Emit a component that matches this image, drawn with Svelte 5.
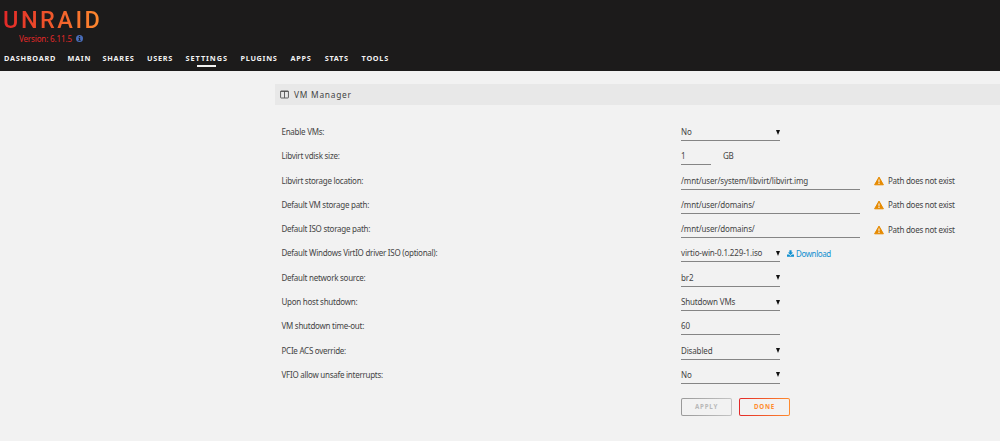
<script>
  const tabs = [
    { name: 'Dashboard', width: 52 },
    { name: 'Main', width: 22.5 },
    { name: 'Shares', width: 32 },
    { name: 'Users', width: 27 },
    { name: 'Settings', width: 42.5 },
    { name: 'Plugins', width: 38 },
    { name: 'Apps', width: 22 },
    { name: 'Stats', width: 25.5 },
    { name: 'Tools', width: 27.5 }
  ]
  const activeTab = 'Settings'

  const fields = [
    { label: 'Enable VMs:', type: 'select', value: 'No' },
    { label: 'Libvirt vdisk size:', type: 'small', value: '1', unit: 'GB' },
    { label: 'Libvirt storage location:', type: 'path', value: '/mnt/user/system/libvirt/libvirt.img', warning: 'Path does not exist' },
    { label: 'Default VM storage path:', type: 'path', value: '/mnt/user/domains/', warning: 'Path does not exist' },
    { label: 'Default ISO storage path:', type: 'path', value: '/mnt/user/domains/', warning: 'Path does not exist' },
    { label: 'Default Windows VirtIO driver ISO (optional):', type: 'select', value: 'virtio-win-0.1.229-1.iso', download: true },
    { label: 'Default network source:', type: 'select', value: 'br2' },
    { label: 'Upon host shutdown:', type: 'select', value: 'Shutdown VMs' },
    { label: 'VM shutdown time-out:', type: 'text', value: '60' },
    { label: 'PCIe ACS override:', type: 'select', value: 'Disabled' },
    { label: 'VFIO allow unsafe interrupts:', type: 'select', value: 'No' }
  ]
</script>

<header class="header">
  <div class="logo">UNRAID</div>
  <div class="version">
    <span>Version: 6.11.5</span>
    <svg class="info" viewBox="0 0 16 16">
      <circle cx="8" cy="8" r="8" fill="#486dba" />
      <path d="M6.7 2.4h2.8v2.4H6.7zM5.3 6.2h4.2v5.2h1.3v1.9H5.3v-1.9h1.4V8.1H5.3z" fill="#1c1c1c" />
    </svg>
  </div>
  <nav class="nav">
    {#each tabs as tab (tab.name)}
      <span class="tab" class:tab--active={tab.name === activeTab} style="width: {tab.width}px">{tab.name}</span>
    {/each}
  </nav>
</header>

<main class="content">
  <h1 class="title">
    <svg class="title-icon" viewBox="0 0 16 16" fill="none" stroke="#4a4a4a" stroke-width="1.5">
      <rect x="1" y="1.8" width="14" height="12.4" rx="1" />
      <path d="M1 2.6h14M8 2v12" />
    </svg>
    <span>VM Manager</span>
  </h1>

  <div class="form">
    {#each fields as field (field.label)}
      <div class="row">
        <span class="label">{field.label}</span>
        <div class="control control--{field.type}">
          <span>{field.value}</span>
          {#if field.type === 'select'}
            <svg class="caret" viewBox="0 0 4 5"><path d="M0 0h4L2 5z" fill="#111" /></svg>
          {/if}
        </div>
        {#if field.unit}
          <span class="unit">{field.unit}</span>
        {/if}
        {#if field.warning}
          <span class="warning">
            <svg class="warning-icon" viewBox="0 0 20 18">
              <path d="M10 1.2 18.8 16.6H1.2z" fill="#e68a00" stroke="#e68a00" stroke-width="2" stroke-linejoin="round" />
              <path d="M8.7 6h2.6l-.4 5.4H9.1zM8.8 12.7h2.4v2.3H8.8z" fill="#f2f2f2" />
            </svg>
            <span>{field.warning}</span>
          </span>
        {/if}
        {#if field.download}
          <a class="download" href="#download">
            <svg class="download-icon" viewBox="0 0 16 15">
              <path d="M5.5 0h5v5H14l-6 6-6-6h3.5z" fill="#1190d0" />
              <path d="M0 9.8h4.8L8 13l3.2-3.2H16V15H0z" fill="#1190d0" />
            </svg>
            <span>Download</span>
          </a>
        {/if}
      </div>
    {/each}
    <div class="buttons">
      <button class="button button--disabled"><span>Apply</span></button>
      <button class="button"><span>Done</span></button>
    </div>
  </div>
</main>

<style>
  :global(body) {
    background: #f2f2f2;
  }

  .header,
  .content {
    font-family: 'Noto Sans', sans-serif;
    font-size: 8px;
    letter-spacing: -0.26px;
    color: #444;
  }

  .header {
    box-sizing: border-box;
    height: 71px;
    padding: 9px 0 0 3px;
    background: #1c1b1b;
  }

  .logo {
    width: 100px;
    height: 22px;
    font-family: Roboto, sans-serif;
    font-size: 23.5px;
    font-weight: 500;
    line-height: 23px;
    letter-spacing: 2.5px;
    white-space: nowrap;
    background: linear-gradient(90deg, #e22828, #ff8c2f);
    background-clip: text;
    color: transparent;
  }

  .version {
    display: flex;
    align-items: center;
    gap: 4px;
    height: 15px;
    padding-left: 16px;
    line-height: 14px;
    letter-spacing: -0.14px;
    color: #e22828;
  }

  .info {
    width: 7px;
    height: 7px;
  }

  .nav {
    display: flex;
    gap: 12px;
    height: 25px;
    padding-left: 1px;
  }

  .tab {
    display: flex;
    flex: none;
    flex-direction: column;
    align-items: center;
    height: 21px;
    line-height: 25px;
    font-size: 7.3px;
    font-weight: 700;
    letter-spacing: 0.72px;
    text-transform: uppercase;
    color: #f2f2f2;
  }

  .tab--active {
    letter-spacing: 0.95px;
  }

  .tab--active::after {
    content: '';
    flex: none;
    width: 19px;
    height: 1.5px;
    margin-top: -6px;
    background: #f2f2f2;
  }

  .content {
    margin-left: 275px;
    padding-top: 13px;
  }

  .title {
    display: flex;
    align-items: center;
    gap: 5px;
    height: 21px;
    margin: 0;
    padding-left: 5px;
    font-size: 8.4px;
    font-weight: 400;
    line-height: 20px;
    letter-spacing: 0.75px;
    background: #e8e8e8;
  }

  .title-icon {
    width: 9px;
    height: 9px;
    margin-top: -1px;
  }

  .form {
    padding: 15px 0 0 6.5px;
  }

  .row {
    display: flex;
    align-items: flex-start;
    height: 24.3px;
    line-height: 24px;
    white-space: nowrap;
  }

  .label {
    width: 399.5px;
  }

  .control {
    box-sizing: border-box;
    display: flex;
    align-items: center;
    justify-content: space-between;
    width: 99px;
    height: 21px;
    padding-top: 4px;
    border-bottom: 1px solid #858585;
    letter-spacing: -0.15px;
  }

  .control--small {
    width: 30px;
  }

  .control--path {
    width: 179px;
  }

  .caret {
    width: 4px;
    height: 5px;
  }

  .unit {
    margin-left: 12px;
  }

  .warning {
    display: flex;
    align-items: center;
    gap: 4px;
    height: 25px;
    margin-left: 14px;
  }

  .warning-icon {
    width: 10px;
    height: 10px;
  }

  .download {
    display: flex;
    align-items: center;
    gap: 2px;
    height: 25px;
    margin-left: 7px;
    letter-spacing: -0.4px;
    color: #1190d0;
    text-decoration: none;
  }

  .download-icon {
    width: 7px;
    height: 7px;
  }

  .buttons {
    display: flex;
    gap: 7px;
    padding: 10.7px 0 0 399.5px;
  }

  .button {
    display: flex;
    width: 51px;
    height: 18px;
    padding: 1.3px;
    border: 0;
    border-radius: 2px;
    font: 700 6.2px 'Noto Sans', sans-serif;
    letter-spacing: 0.8px;
    text-transform: uppercase;
    color: #ff8c2f;
    background: linear-gradient(90deg, #e22828, #ff8c2f);
  }

  .button span {
    display: flex;
    flex: 1;
    align-items: center;
    justify-content: center;
    align-self: stretch;
    border-radius: 1px;
    background: #f2f2f2;
  }

  .button--disabled {
    color: #b8b8b8;
    background: linear-gradient(90deg, #999, #c4c4c4);
  }
</style>
